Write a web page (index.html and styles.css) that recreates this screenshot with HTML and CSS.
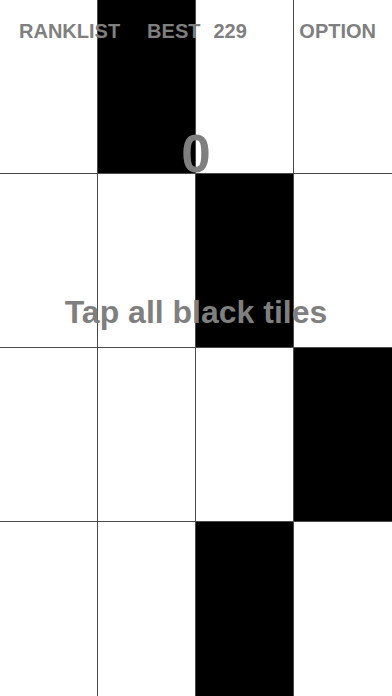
FILE: index.html
```html
<!DOCTYPE html>
<html>
<head>
<meta charset="utf-8">
<link rel="stylesheet" href="styles.css">
</head>
<body>
<div class="stage">
  <div class="board">
    <div class="cell"></div><div class="cell black"></div><div class="cell"></div><div class="cell last-col"></div>
    <div class="cell"></div><div class="cell"></div><div class="cell black"></div><div class="cell last-col"></div>
    <div class="cell"></div><div class="cell"></div><div class="cell"></div><div class="cell black last-col"></div>
    <div class="cell last-row"></div><div class="cell last-row"></div><div class="cell black last-row"></div><div class="cell last-col last-row"></div>
  </div>
  <div class="overlay">
    <div class="topbar">
      <span class="rank">RANKLIST</span>
      <span class="best">BEST</span>
      <span class="best-val">229</span>
      <span class="option">OPTION</span>
    </div>
    <div class="score">0</div>
    <div class="hint">Tap all black tiles</div>
  </div>
</div>
</body>
</html>
```

FILE: styles.css
```css
html, body {
  margin: 0;
  padding: 0;
  background: #fff;
}
.stage {
  position: relative;
  width: 392px;
  height: 696px;
  overflow: hidden;
  font-family: "Liberation Sans", Arial, sans-serif;
}
.board {
  display: grid;
  grid-template-columns: repeat(4, 98px);
  grid-template-rows: repeat(4, 174px);
}
.cell {
  box-sizing: border-box;
  background: #fff;
  border-right: 1px solid #4a4a4a;
  border-bottom: 1px solid #4a4a4a;
}
.cell.black { background: #000; }
.cell.last-col { border-right: none; }
.cell.last-row { border-bottom: none; }
.overlay {
  position: absolute;
  inset: 0;
  display: flex;
  flex-direction: column;
  color: #7f7f7f;
  font-weight: bold;
}
.topbar {
  display: flex;
  padding: 20px 16px 0 19px;
  font-size: 20px;
  line-height: 23px;
}
.best { margin-left: 27px; }
.best-val { margin-left: 13px; }
.option { margin-left: auto; }
.score {
  margin-top: 84px;
  text-align: center;
  font-size: 53px;
  line-height: 53px;
}
.hint {
  margin-top: 116px;
  text-align: center;
  font-size: 32px;
  line-height: 32px;
}
```
